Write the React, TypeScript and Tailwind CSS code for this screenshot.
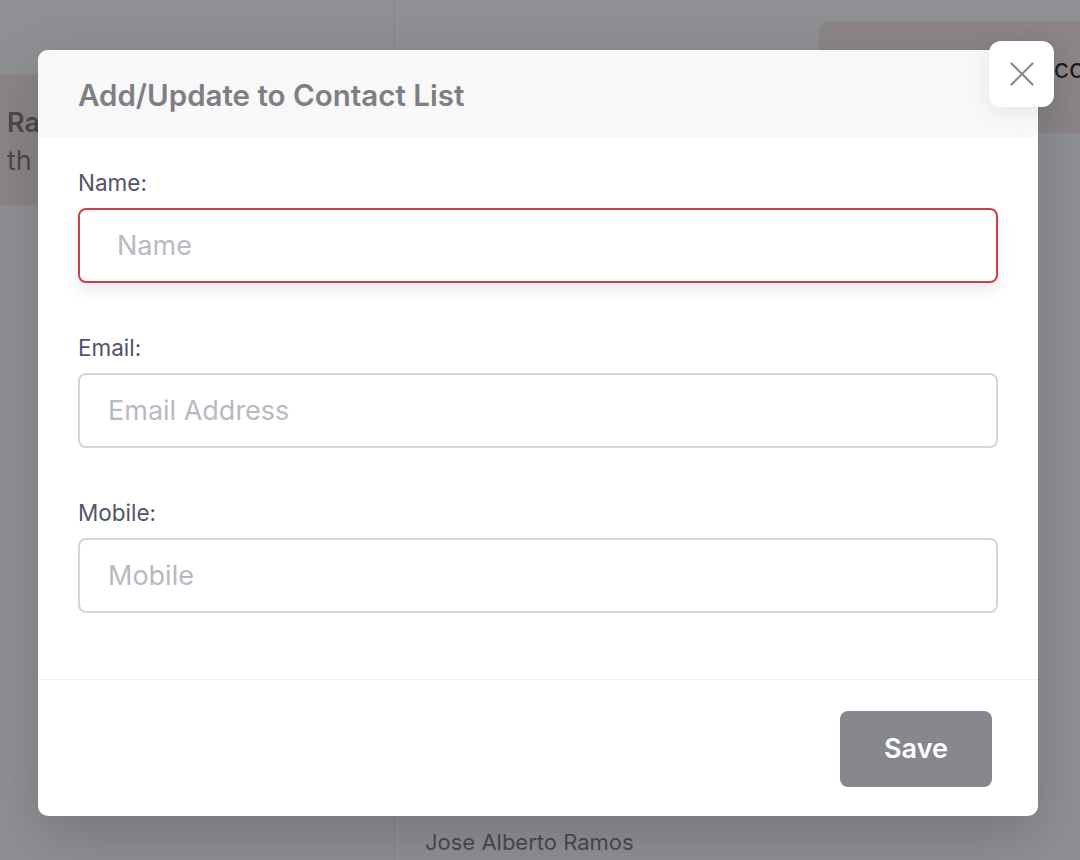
import { X } from "lucide-react";

const font = { fontFamily: "Inter, 'Noto Sans', sans-serif" };

function Field({
  label,
  placeholder,
  invalid,
}: {
  label: string;
  placeholder: string;
  invalid?: boolean;
}) {
  return (
    <div className="flex flex-col">
      <label className="h-[28px] flex items-center text-[22.5px] text-[#55536b]">{label}</label>
      <input
        placeholder={placeholder}
        className={
          invalid
            ? "mt-[11px] h-[75px] w-full rounded-[8px] border-2 border-[#cc3f48] bg-white pl-[37px] text-[27px] text-gray-700 placeholder:text-[#b9b9c3] shadow-[0_8px_16px_rgba(0,0,0,0.08)] outline-none"
            : "mt-[11px] h-[75px] w-full rounded-[8px] border-2 border-[#d5d5da] bg-white pl-[28px] text-[27px] text-gray-700 placeholder:text-[#b9b9c3] outline-none"
        }
      />
    </div>
  );
}

export default function App() {
  return (
    <div className="relative h-[860px] w-full overflow-hidden bg-[#8f9094]" style={font}>
      {/* page behind the overlay */}
      <div className="flex h-full">
        <div className="w-[395px] shrink-0 border-r border-[#85868b]">
          <div className="mt-[74px] h-[131px] bg-[#8b8587] pl-[7px] pt-[30px]">
            <div className="text-[27px] font-semibold leading-[38px] text-[#4b4a50] whitespace-nowrap">Ramos</div>
            <div className="text-[27px] leading-[38px] text-[#4b4a50] whitespace-nowrap">th records</div>
          </div>
        </div>
        <div className="flex flex-1 flex-col">
          <div className="mt-[21px] ml-auto h-[112px] w-[261px] rounded-tl-[10px] bg-[#8b8587] pl-[216px] pt-[28px]">
            <span className="text-[27px] text-[#1d1c20] whitespace-nowrap">Account</span>
          </div>
          <div className="mt-auto pb-[1px] pl-[30px] text-[22px] text-[#4a4a55]">Jose Alberto Ramos</div>
        </div>
      </div>

      {/* modal */}
      <div className="absolute left-[38px] top-[50px] w-[1000px] rounded-[10px] bg-white shadow-[0_20px_60px_rgba(0,0,0,0.18)]">
        <div className="flex h-[87px] items-center rounded-t-[10px] bg-[#f8f8f8] px-[40px] pt-[4px]">
          <h2 className="text-[29.5px] font-semibold text-[#7d7f85]">Add/Update to Contact List</h2>
        </div>
        <div className="flex flex-col gap-[51px] px-[40px] pt-[32px] pb-[66px]">
          <Field label="Name:" placeholder="Name" invalid />
          <Field label="Email:" placeholder="Email Address" />
          <Field label="Mobile:" placeholder="Mobile" />
        </div>
        <div className="flex justify-end border-t border-[#f0f0f2] pt-[31px] pr-[46px] pb-[29px]">
          <button className="h-[76px] w-[152px] rounded-[8px] bg-[#86888d] text-[27px] font-semibold text-white">
            Save
          </button>
        </div>
      </div>

      <button className="absolute left-[989px] top-[41px] flex h-[66px] w-[65px] items-center justify-center rounded-[12px] bg-white shadow-[0_4px_24px_rgba(0,0,0,0.08)]">
        <X size={42} strokeWidth={1.3} className="text-[#8a8b90]" />
      </button>
    </div>
  );
}
